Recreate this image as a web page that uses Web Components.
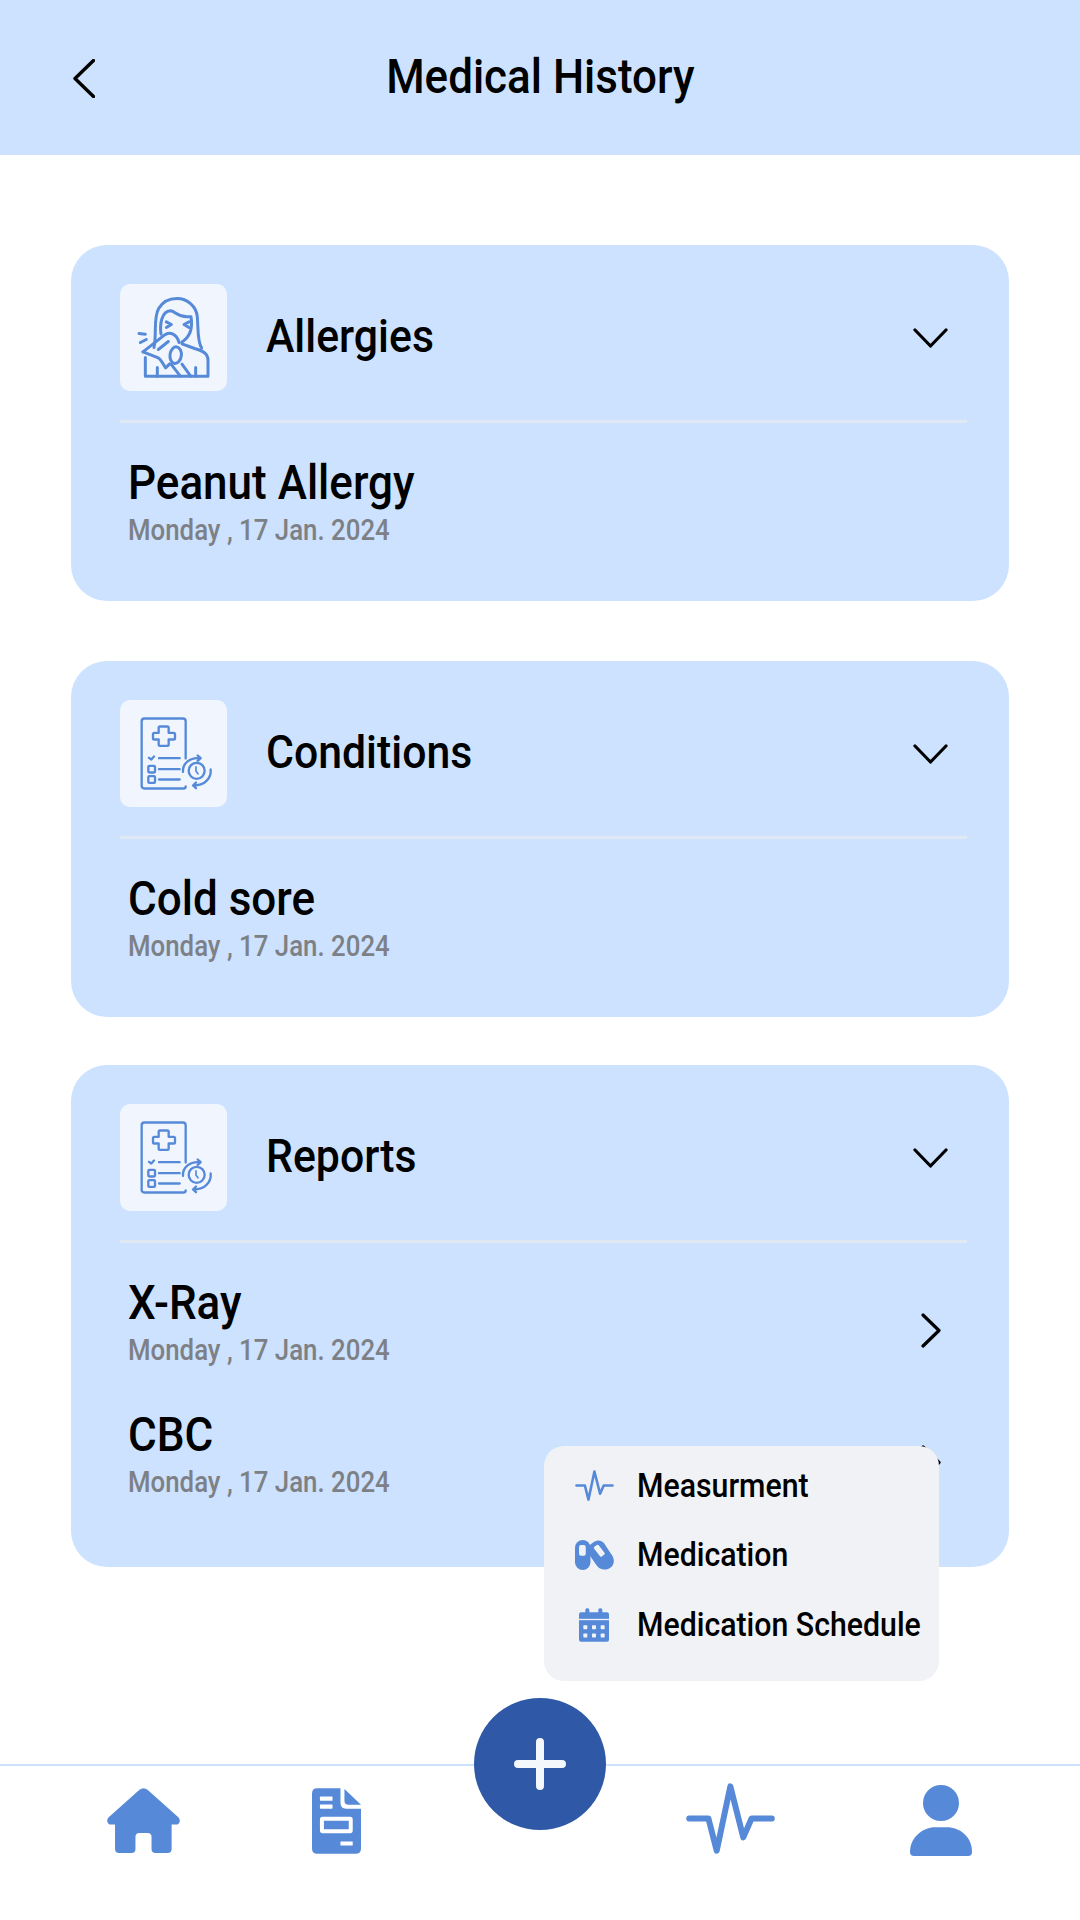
<!DOCTYPE html>
<html><head><meta charset="utf-8">
<style>
html,body{margin:0;padding:0;background:#fff;font-family:Roboto,"Liberation Sans",sans-serif;color:#000}
</style></head><body>
<medical-app></medical-app>
<script>
const chevron={
 back:'<svg width="22" height="39" viewBox="0 0 22 39" fill="none" stroke="#000" stroke-width="3.4" stroke-linecap="round" stroke-linejoin="round"><path d="M20.5 1.5 2 19.5 20.5 37.5"/></svg>',
 down:'<svg width="35" height="20" viewBox="0 0 35 20" fill="none" stroke="#000" stroke-width="3.2" stroke-linecap="round" stroke-linejoin="round"><path d="M2 2 17.5 18 33 2"/></svg>',
 right:'<svg width="20" height="35" viewBox="0 0 20 35" fill="none" stroke="#000" stroke-width="3.2" stroke-linecap="round" stroke-linejoin="round"><path d="M2 2 18 17.5 2 33"/></svg>'
};
const icons={
 woman:`<svg width="107" height="107" viewBox="61 42 321 320" fill="none" stroke="#568ad9" stroke-width="9" stroke-linecap="round" stroke-linejoin="round">
  <path d="M163 232C172 190 160 145 177 115 190 93 212 85 232 85c30 0 58 22 61 55 3 40 0 75 13 94"/>
  <path d="M184 192C180 160 186 124 212 122c14 0 20 18 50 18h12c4 24 2 58-28 76"/>
  <path d="M200 155l15 8-15 9M268 155l-15 8 15 9"/>
  <path d="M130 245l64-50c16-12 38-4 44 22"/><path d="M130 245l46 18c6 3 12 14 22 30l12-12"/>
  <path d="M176 238l30-24"/>
  <ellipse cx="228" cy="255" rx="17" ry="25" transform="rotate(8 228 255)"/>
  <path d="M137 262v56h188v-48c0-20-15-28-40-35l-38-14"/>
  <path d="M173 292v26M288 292v26M214 282l28 36M247 282l26 36"/>
  <path d="M118 190l19 2M122 217l18-9"/></svg>`,
 chart:`<svg width="107" height="107" viewBox="61 30 321 320" fill="none" stroke="#568ad9" stroke-width="7" stroke-linecap="round" stroke-linejoin="round">
  <path d="M258 205V93q0-8-8-8H134q-8 0-8 8v194q0 8 8 8h118q6 0 6-6"/>
  <path d="M181 109h22q4 0 4 4v15h15q4 0 4 4v12q0 4-4 4h-15v15q0 4-4 4h-22q-4 0-4-4v-15h-13q-4 0-4-4v-12q0-4 4-4h13v-15q0-4 4-4z"/>
  <path d="M148 203l7 5 8-9M178 204h62M178 237h62M178 268h62"/>
  <rect x="146" y="227" width="20" height="20" rx="3"/><rect x="146" y="258" width="20" height="20" rx="3"/>
  <circle cx="291" cy="242" r="24"/><path d="M289 230v13l6 8" stroke-width="5"/>
  <path d="M250 245c-2-26 22-44 50-41M294 196l9 8-9 8"/>
  <path d="M333 238c3 28-22 50-50 47M289 277l-9 9 9 8"/></svg>`,
 pulse:(w,h)=>`<svg width="${w}" height="${h}" viewBox="378 308 267 214" fill="none" stroke="#568ad9" stroke-width="18" stroke-linecap="round" stroke-linejoin="round"><path d="M387 415H445L470 512 511 318 550 472 575 415H636"/></svg>`,
 pills:`<svg width="39" height="30" viewBox="138 358 116 89"><rect x="138" y="358" width="46" height="89" rx="23" fill="#568ad9"/><rect x="150" y="373" width="20" height="32" rx="6" fill="#f0f2f5"/><path d="M190 367c10-10 26-10 34 0l20 30c14 16 12 36-2 44-14 8-30 6-40-8l-22-32c-8-12-1-28 10-34z" fill="#568ad9"/><rect x="202" y="372" width="17" height="36" rx="4" fill="#f0f2f5" transform="rotate(-38 210 390)"/></svg>`,
 cal:`<svg width="30" height="34" viewBox="147 562 90 101"><rect x="147" y="574" width="90" height="89" rx="6" fill="#568ad9"/><rect x="166" y="562" width="12" height="20" rx="5" fill="#568ad9"/><rect x="205" y="562" width="12" height="20" rx="5" fill="#568ad9"/><rect x="147" y="594" width="90" height="4" fill="#f0f2f5"/>
  <g fill="#f0f2f5"><rect x="160" y="613" width="12" height="12" rx="2"/><rect x="186" y="613" width="12" height="12" rx="2"/><rect x="212" y="613" width="12" height="12" rx="2"/><rect x="160" y="638" width="12" height="12" rx="2"/><rect x="186" y="638" width="12" height="12" rx="2"/><rect x="212" y="638" width="12" height="12" rx="2"/></g></svg>`,
 home:`<svg width="73" height="65" viewBox="141 325 218 194"><path fill="#568ad9" d="M238 330Q250 321 262 330L354 412Q364 424 352 434H334V507Q334 519 322 519H286Q274 519 274 507V471Q274 459 262 459H238Q226 459 226 471V507Q226 519 214 519H177Q165 519 165 507V434H148Q136 424 146 412Z"/></svg>`,
 doc:`<svg width="49" height="66" viewBox="756 325 148 198"><path fill="#568ad9" d="M772 325H842V370Q842 387 859 387H904V507Q904 523 888 523H772Q756 523 756 507V341Q756 325 772 325Z"/><path fill="#568ad9" d="M854 327L904 375H866Q854 375 854 363Z"/><g fill="#fff"><rect x="780" y="350" width="38" height="13" rx="2"/><rect x="780" y="374" width="38" height="13" rx="2"/><rect x="842" y="486" width="37" height="12" rx="1"/></g><rect x="786" y="417" width="87" height="38" rx="2" fill="#568ad9" stroke="#fff" stroke-width="12"/></svg>`,
 user:`<svg width="62" height="71" viewBox="1050 314 186 213"><circle cx="1143" cy="368" r="54" fill="#568ad9"/><path fill="#568ad9" d="M1050 515C1050 470 1090 441 1125 441H1161C1200 441 1236 470 1236 515Q1236 527 1224 527H1062Q1050 527 1050 515Z"/></svg>`
};
function def(name,css,html){
 customElements.define(name,class extends HTMLElement{
  constructor(){super();this.attachShadow({mode:'open'});}
  connectedCallback(){
   this.shadowRoot.innerHTML=`<style>${css}</style>`+(typeof html==='function'?html(this):html);
  }
 });
}
def('app-header',`:host{display:flex;align-items:center;justify-content:center;height:155px;background:#cce2ff;position:relative;padding-bottom:2px;box-sizing:border-box}
 .b{position:absolute;left:73px;top:59px;display:block;line-height:0}
 h1{margin:0;font:500 48px/60px var(--f);white-space:nowrap;transform:scaleX(.916);transform-origin:center}`,
 h=>`<span class="b">${chevron.back}</span><h1><slot></slot></h1>`);
def('history-card',`:host{display:block;width:938px;box-sizing:border-box;background:#cce2ff;border-radius:36px;padding:39px 42px var(--pb,53px) 49px}
 .head{display:flex;align-items:center;height:107px}
 .box{width:107px;height:107px;border-radius:10px;background:#f1f6fe;line-height:0;flex:none}
 .t{margin-left:39px;font:500 46px/56px var(--f);flex:1;margin-top:-3px}
 .t span{display:inline-block;transform:scaleX(.93);transform-origin:left}
 .c{line-height:0;margin-right:19px}
 .d{height:3px;background:#e0e9f3;margin-top:29px}
 .rows{display:flex;flex-direction:column;gap:39px;padding:32px 0 0 8px}`,
 h=>`<div class="head"><div class="box">${icons[h.getAttribute('icon')]}</div><div class="t"><span>${h.getAttribute('title')}</span></div><div class="c">${chevron.down}</div></div><div class="d"></div><div class="rows"><slot></slot></div>`);
def('history-row',`:host{display:flex;align-items:center;justify-content:space-between;height:93px}
 .n{font:500 48px/54px var(--f);padding-top:1px;transform:scaleX(.917);transform-origin:left;white-space:nowrap}
 .s{font:500 29px/36px var(--f);color:#7d8085;margin-top:2px;transform:scaleX(.89);transform-origin:left;white-space:nowrap}
 .c{line-height:0;margin-right:26px;padding-top:17px}`,
 h=>`<div><div class="n">${h.getAttribute('name')}</div><div class="s">${h.getAttribute('date')}</div></div>${h.hasAttribute('arrow')?`<div class="c">${chevron.right}</div>`:''}`);
def('popup-menu',`:host{display:block;position:absolute;left:544px;top:1446px;width:395px;height:235px;box-sizing:border-box;background:#f0f2f5;border-radius:20px;padding:5px 0 0 30px;overflow:hidden}
 .i{display:flex;align-items:center;height:69px;font:500 33px/40px var(--f);white-space:nowrap}
 .i:last-child{margin-top:1px}
 .g{flex:none;width:40px;margin-right:23px;display:flex;justify-content:center;line-height:0}
 .x{display:inline-block;transform:scaleX(.917);transform-origin:left}`,
 h=>`<div class="i"><span class="g">${icons.pulse(39,31)}</span><span class="x">Measurment</span></div><div class="i"><span class="g">${icons.pills}</span><span class="x">Medication</span></div><div class="i"><span class="g">${icons.cal}</span><span class="x">Medication Schedule</span></div>`);
def('bottom-nav',`:host{display:grid;grid-template-columns:197px 189px 218px 163px 258px;padding-left:45px;align-items:start;position:absolute;left:0;right:0;top:1764px;height:156px;box-sizing:border-box;border-top:2px solid #cce2ff;background:#fff}
 .n{display:flex;justify-content:center;line-height:0;padding-top:22px}
 .n.p{padding-top:17px}.n.a{padding-top:19px}
 .fab{position:absolute;left:474px;top:-68px;width:132px;height:132px;border-radius:50%;background:#2f58a6;display:flex;align-items:center;justify-content:center;line-height:0}`,
 h=>`<div class="n">${icons.home}</div><div class="n">${icons.doc}</div><div></div><div class="n p">${icons.pulse(89,71)}</div><div class="n a">${icons.user}</div>
 <div class="fab"><svg width="52" height="52" viewBox="0 0 52 52" stroke="#f4f7fc" stroke-width="8" stroke-linecap="round"><path d="M26 4V48M4 26H48"/></svg></div>`);
def('medical-app',`:host{display:block;position:relative;width:1080px;height:1920px;overflow:hidden;background:#fff;--f:Roboto,"Liberation Sans",sans-serif}
 main{display:flex;flex-direction:column;align-items:flex-start;padding:90px 0 0 71px}
 .g1{margin-top:60px}.g2{margin-top:48px}`,
 h=>`<app-header>Medical History</app-header><main>
 <history-card icon="woman" title="Allergies"><history-row name="Peanut Allergy" date="Monday , 17 Jan. 2024"></history-row></history-card>
 <history-card class="g1" icon="chart" title="Conditions"><history-row name="Cold sore" date="Monday , 17 Jan. 2024"></history-row></history-card>
 <history-card class="g2" style="--pb:67px" icon="chart" title="Reports"><history-row arrow name="X-Ray" date="Monday , 17 Jan. 2024"></history-row><history-row arrow name="CBC" date="Monday , 17 Jan. 2024"></history-row></history-card>
 </main><popup-menu></popup-menu><bottom-nav></bottom-nav>`);
</script></body></html>
